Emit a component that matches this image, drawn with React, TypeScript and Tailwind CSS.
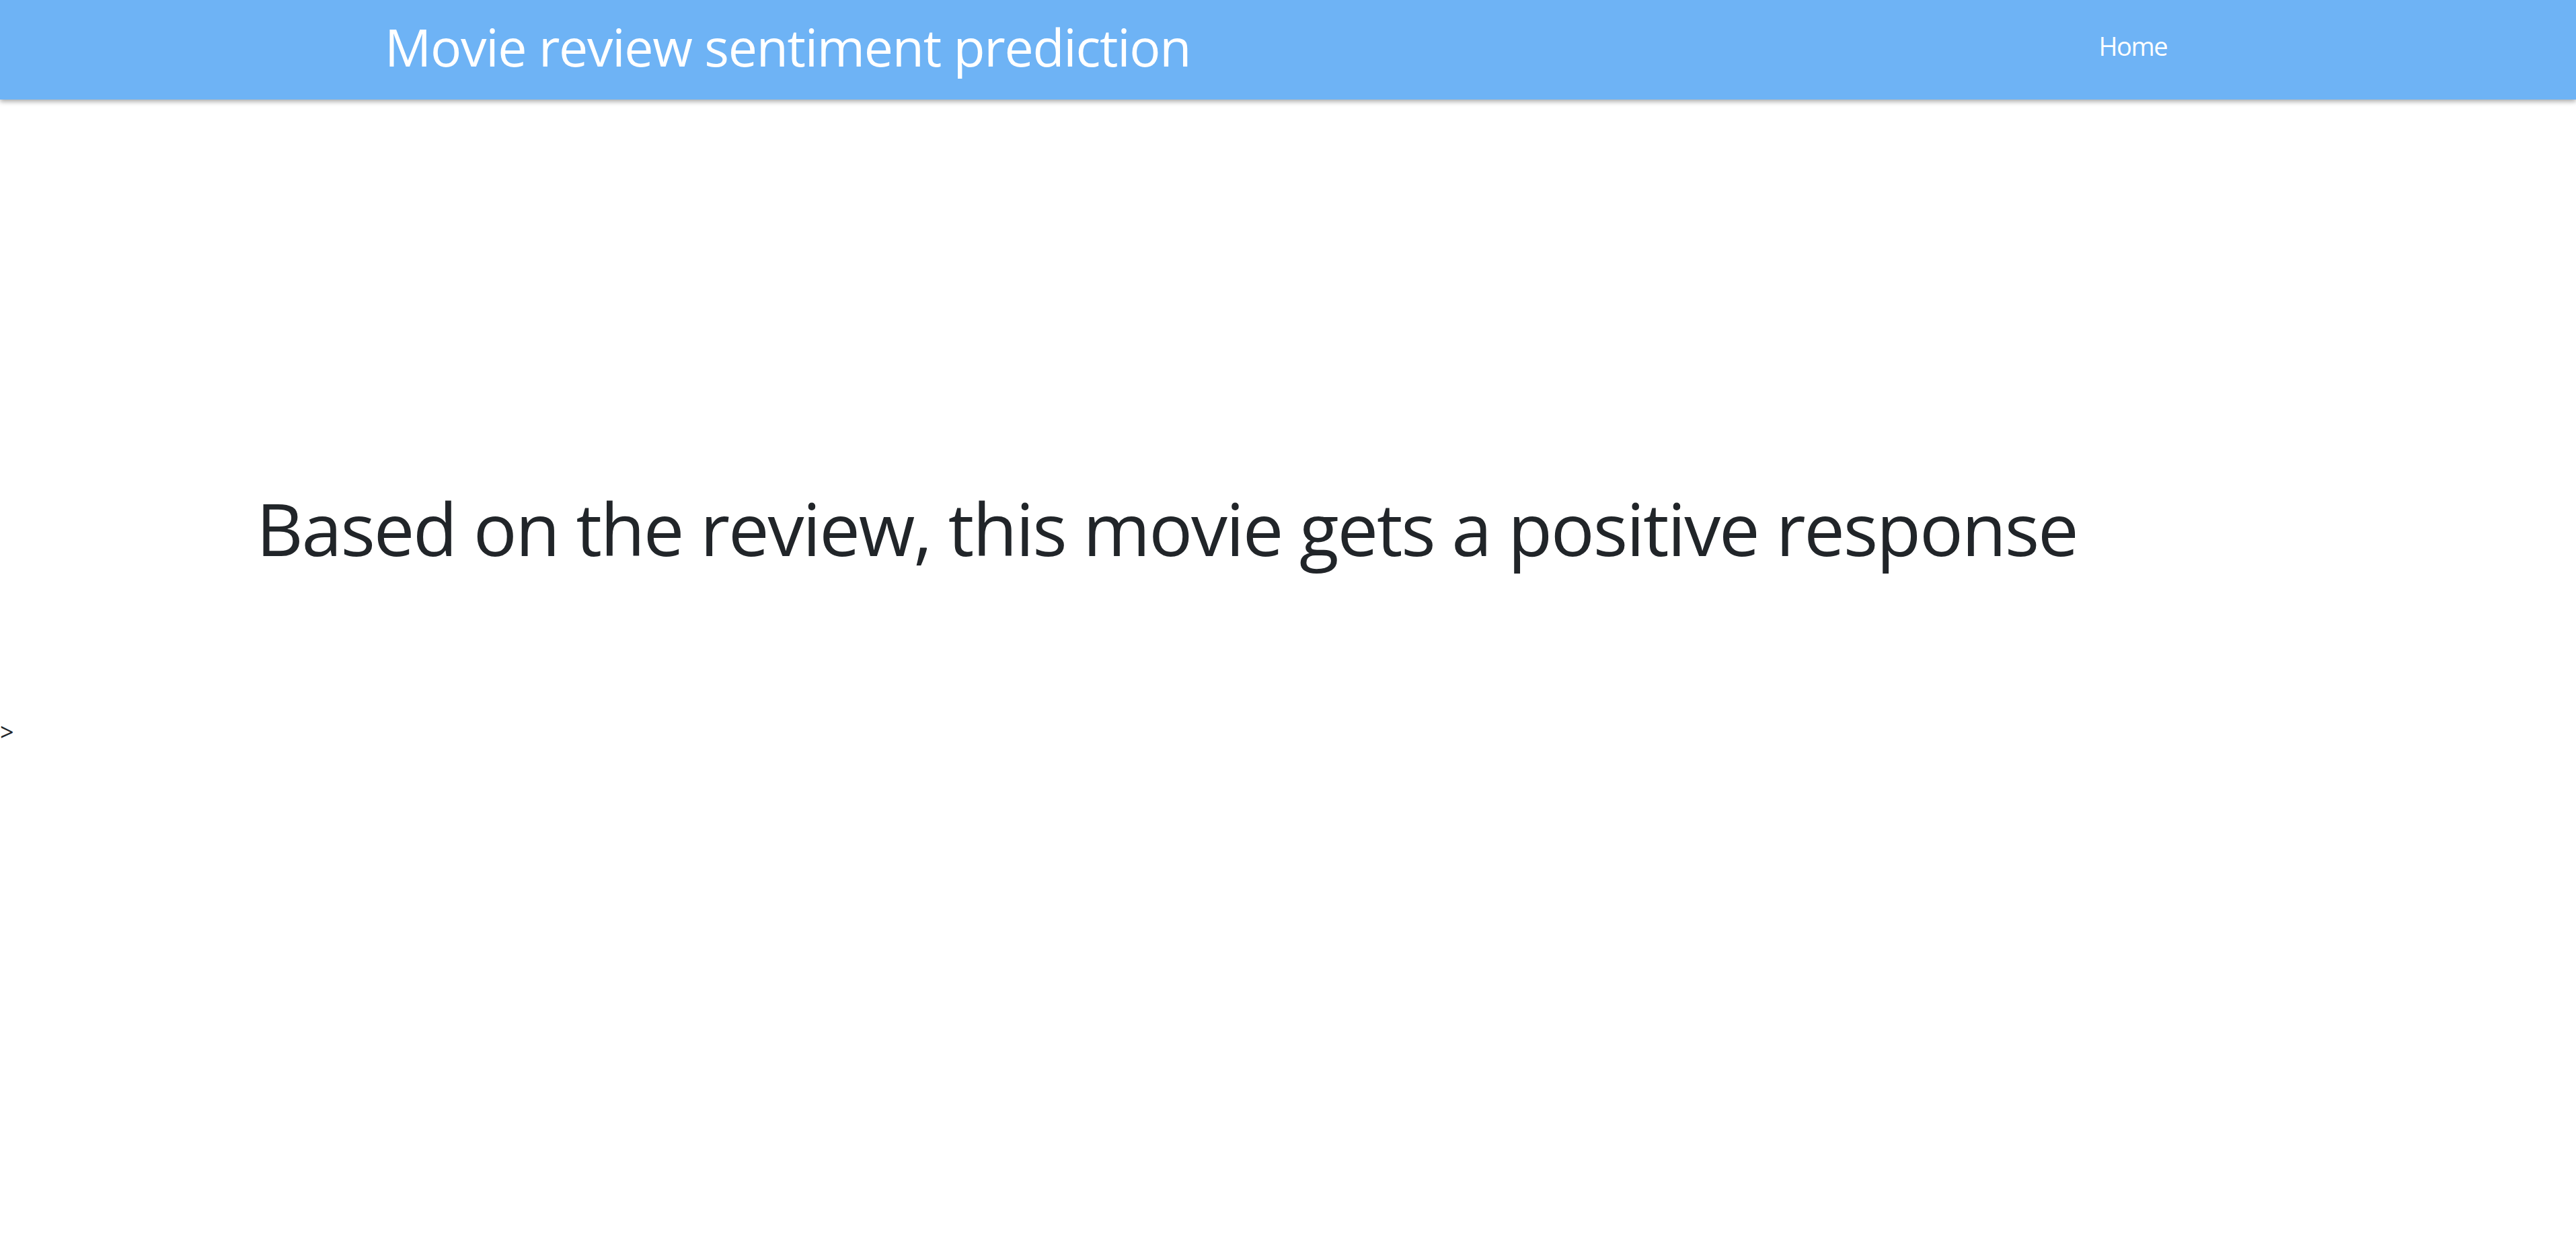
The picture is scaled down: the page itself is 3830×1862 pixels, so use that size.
export default function App() {
  return (
    <div className="min-h-[1862px] bg-white font-['Open_Sans',sans-serif] text-[#212529]">
      <nav className="relative z-10 h-[148px] bg-[#6eb3f5] shadow-[0_3px_7px_rgba(0,0,0,0.35)]">
        <div className="mx-auto flex w-[2686px] items-start justify-between">
          <a className="mt-[31px] text-[77px] leading-none tracking-[-1.3px] text-white">Movie review sentiment prediction</a>
          <a className="mr-[36px] mt-[49px] text-[38px] leading-none tracking-[-1.5px] text-white">Home</a>
        </div>
      </nav>
      <div className="pl-[381px] pt-[573px]">
        <h1 className="text-[108px] font-normal leading-[1.2] tracking-[-2.2px]">Based on the review, this movie gets a positive response</h1>
      </div>
      <div className="mt-[220px] text-[36px] leading-none">&gt;</div>
    </div>
  );
}
